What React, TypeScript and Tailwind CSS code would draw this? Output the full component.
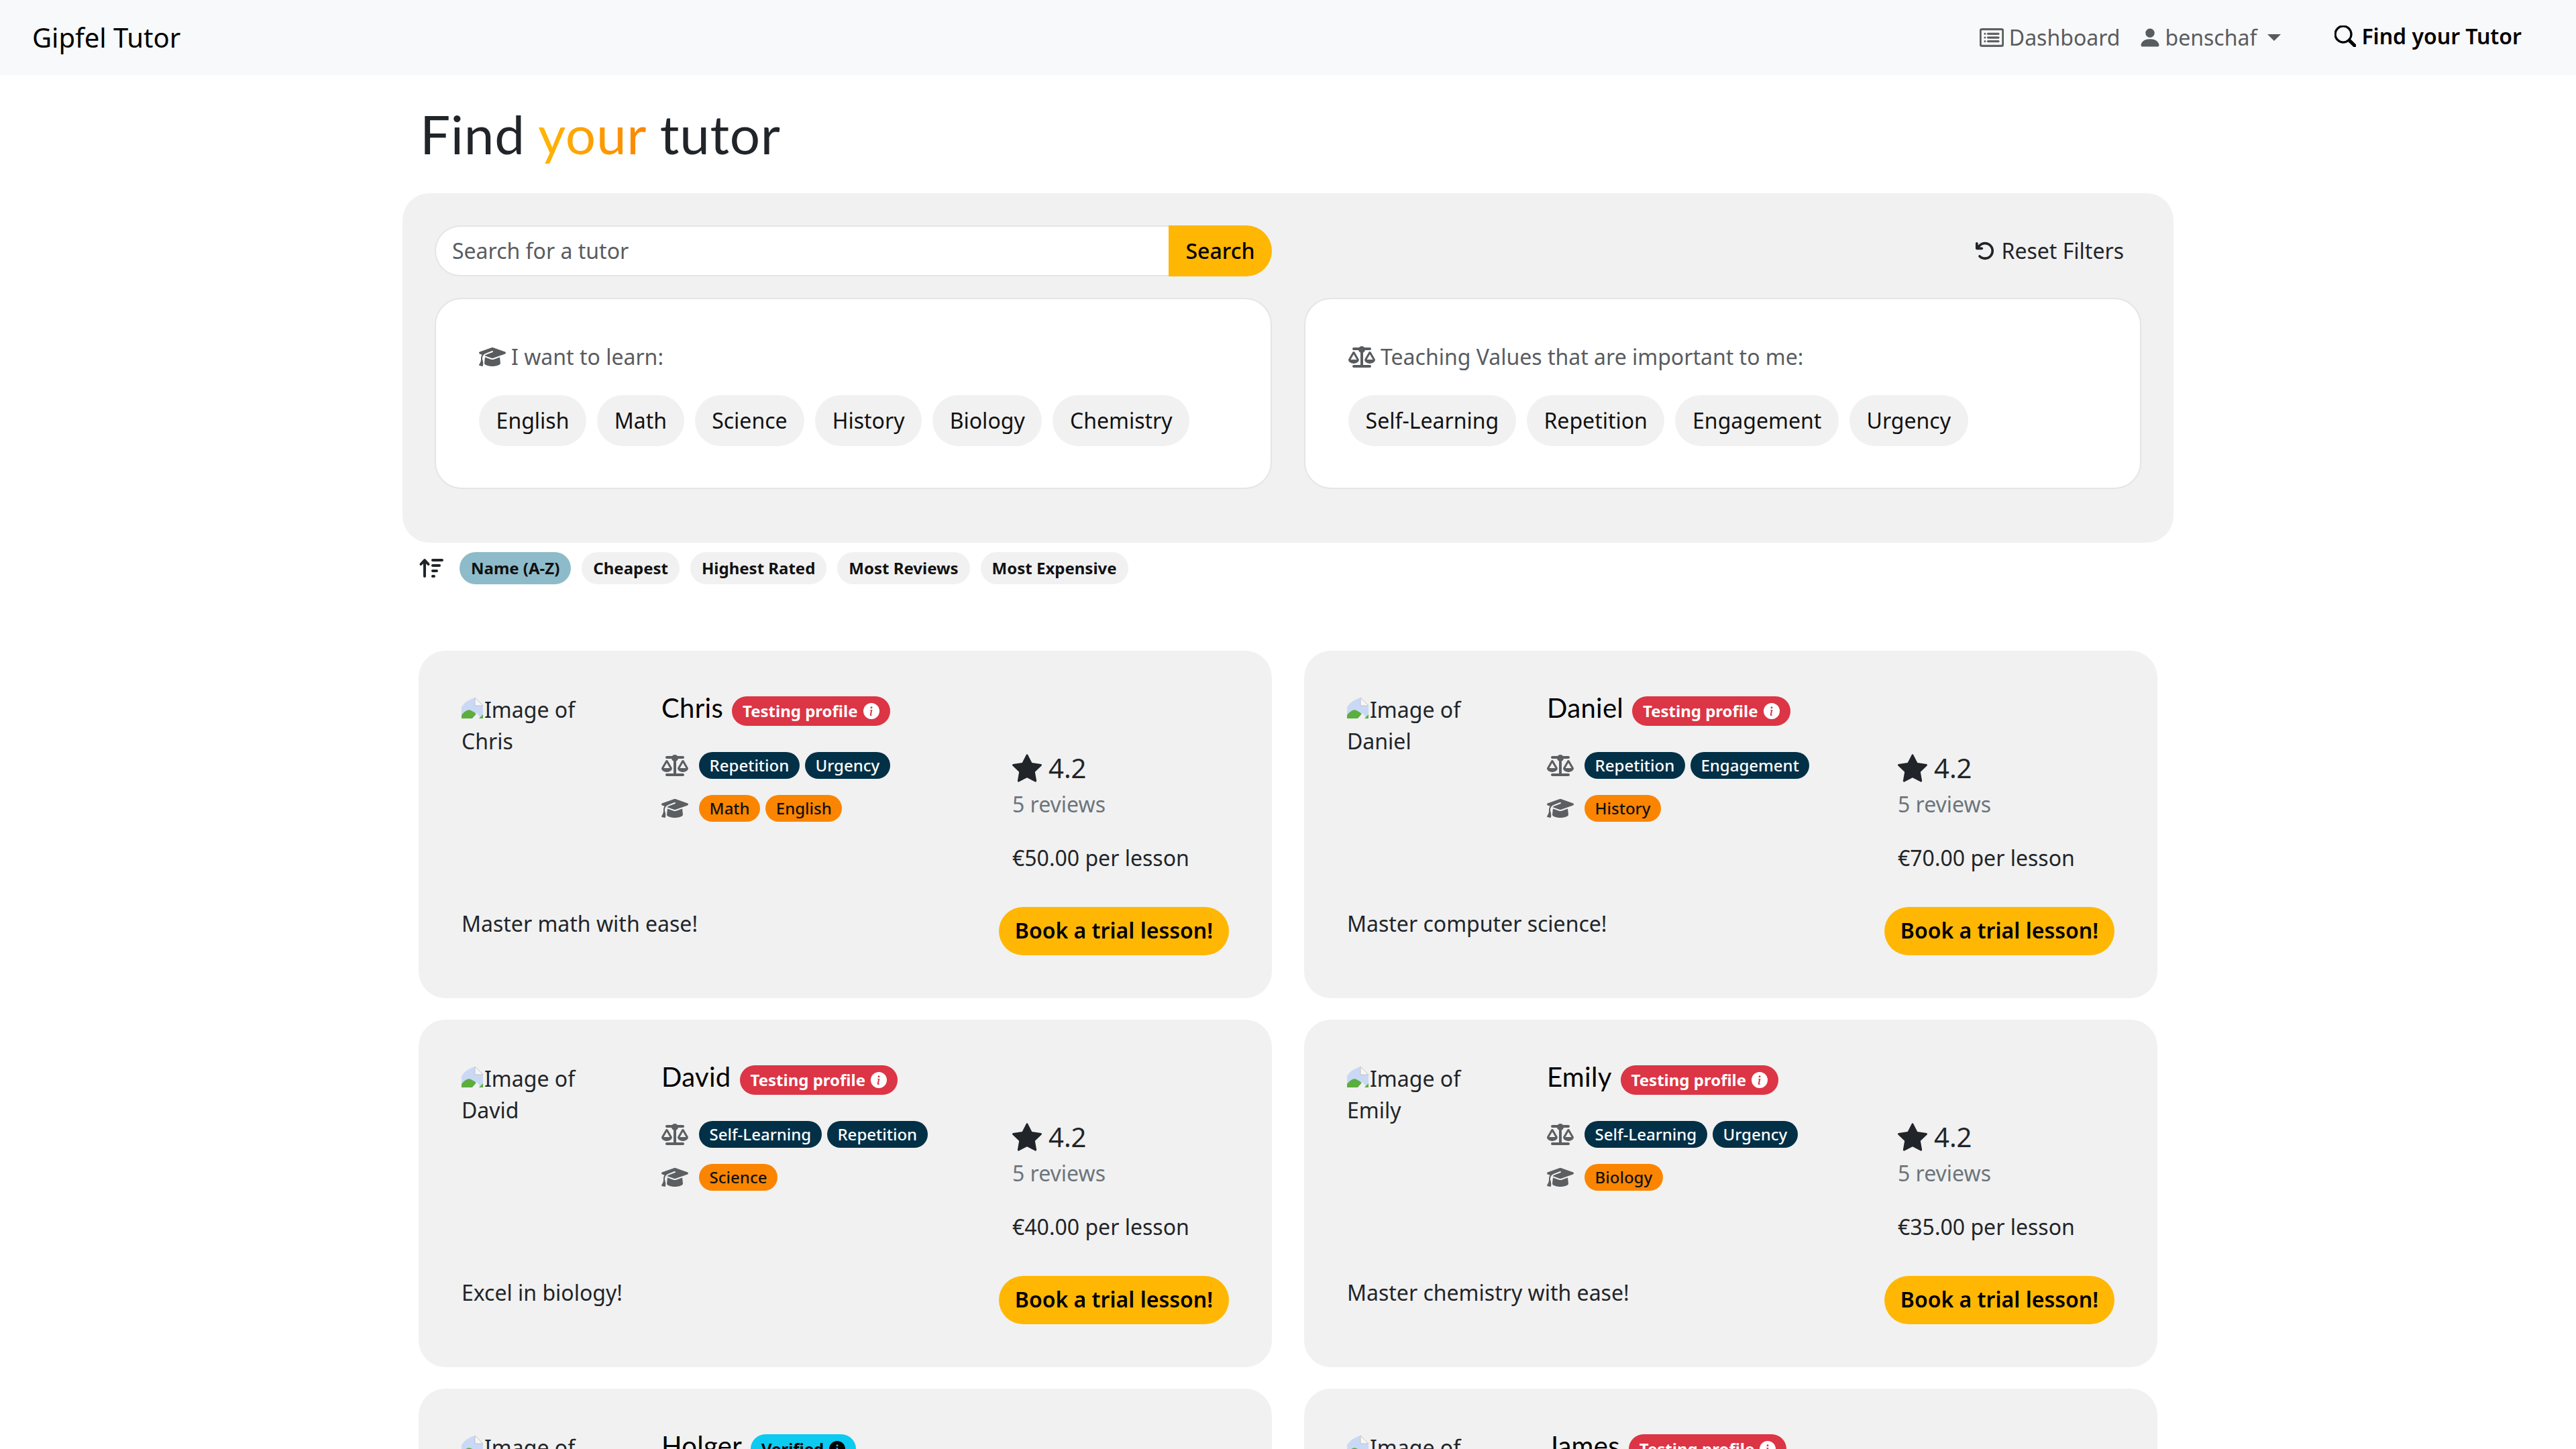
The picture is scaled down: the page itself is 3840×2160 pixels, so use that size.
import { BsCardList, BsInfoCircleFill, BsPersonFill, BsSearch, BsStarFill } from "react-icons/bs";
import { FaArrowRotateLeft, FaArrowUpWideShort, FaGraduationCap, FaScaleBalanced } from "react-icons/fa6";

// ─── Data ─────────────────────────────────────────────────────────────────────

const SUBJECTS = ["English", "Math", "Science", "History", "Biology", "Chemistry"];
const VALUES = ["Self-Learning", "Repetition", "Engagement", "Urgency"];
const SORTS = ["Name (A-Z)", "Cheapest", "Highest Rated", "Most Reviews", "Most Expensive"];

type Tutor = {
  name: string;
  verified?: boolean;
  values: string[];
  subjects: string[];
  price: string;
  tagline: string;
};

const TUTORS: Tutor[] = [
  { name: "Chris", values: ["Repetition", "Urgency"], subjects: ["Math", "English"], price: "€50.00", tagline: "Master math with ease!" },
  { name: "Daniel", values: ["Repetition", "Engagement"], subjects: ["History"], price: "€70.00", tagline: "Master computer science!" },
  { name: "David", values: ["Self-Learning", "Repetition"], subjects: ["Science"], price: "€40.00", tagline: "Excel in biology!" },
  { name: "Emily", values: ["Self-Learning", "Urgency"], subjects: ["Biology"], price: "€35.00", tagline: "Master chemistry with ease!" },
  { name: "Holger", verified: true, values: ["Engagement"], subjects: ["Math"], price: "€45.00", tagline: "Learn with me!" },
  { name: "James", values: ["Urgency"], subjects: ["History"], price: "€30.00", tagline: "Master history with ease!" },
];

const HEADING_FONT = "font-['Lato',sans-serif]";

// ─── Components ───────────────────────────────────────────────────────────────

// Chrome's broken image placeholder, since the reference's photos failed to load
function BrokenImage() {
  return (
    <svg width="32" height="32" viewBox="0 0 16 16" className="inline-block align-[-2px] mr-[2px]">
      <path d="M0 15.5V7Q3 2 10 0l6 6v9.5z" fill="#c9d9f5" />
      <path d="M10 0v6h6z" fill="#f7f7f7" stroke="#b8b8b8" strokeWidth="0.4" />
      <path d="M0 15.5V13Q4 8 7 9.5q2.5 1 4 3l-3 3z" fill="#5cae3f" />
      <path d="M8 15.5l3.5-4 3 4z" fill="#f1f1f1" />
      <path d="M13 15.5l3-3v3z" fill="#5cae3f" />
    </svg>
  );
}

function FilterPill({ label }: { label: string }) {
  return <span className="h-[76px] rounded-full bg-[#f1f1f1] px-[25.6px] flex items-center text-[32px] text-[#111]">{label}</span>;
}

function FilterCard({ icon, title, options }: { icon: React.ReactNode; title: string; options: string[] }) {
  return (
    <div className="h-[285px] rounded-[40px] border-2 border-[#e3e5e8] bg-white px-[64px] pt-[62px]">
      <div className="flex items-center gap-[8px] h-[48px] text-[#595c5f]">
        {icon}
        <span>{title}</span>
      </div>
      <div className="mt-[33px] flex gap-[16px]">
        {options.map((o) => (
          <FilterPill key={o} label={o} />
        ))}
      </div>
    </div>
  );
}

function Badge({ label, className }: { label: string; className: string }) {
  return <span className={`h-[40px] rounded-full px-[15.6px] flex items-center text-[24px] font-medium ${className}`}>{label}</span>;
}

function TutorCard({ tutor }: { tutor: Tutor }) {
  return (
    <div className="h-[518px] rounded-[40px] bg-[#f1f1f1] px-[64px] pt-[64px] flex flex-col">
      <div className="flex h-[318px]">
        <div className="w-[298px] text-[#212529] pr-[60px] leading-[47px]">
          <BrokenImage />
          Image of {tutor.name}
        </div>

        <div className="w-[523px]">
          <div className="flex items-center gap-[13px] h-[48px]">
            <span className={`${HEADING_FONT} -mt-[6px] text-[40px] tracking-[0.3px] text-black`}>{tutor.name}</span>
            {tutor.verified ? (
              <span className="mt-[4px] h-[44px] rounded-full bg-[#0dcaf0] text-black px-[16px] flex items-center gap-[8px] text-[24px] font-bold">
                Verified <BsInfoCircleFill className="w-[24px] h-[24px]" />
              </span>
            ) : (
              <span className="mt-[4px] h-[44px] rounded-full bg-[#dc3545] text-white px-[16px] flex items-center gap-[8px] text-[24px] font-bold">
                Testing profile <BsInfoCircleFill className="w-[24px] h-[24px]" />
              </span>
            )}
          </div>

          <div className="mt-[39px] flex items-center gap-[8px]">
            <FaScaleBalanced className="w-[40px] h-[32px] text-[#5c5f62] mr-[8px]" />
            {tutor.values.map((v) => (
              <Badge key={v} label={v} className="bg-[#023047] text-white" />
            ))}
          </div>
          <div className="mt-[24px] flex items-center gap-[8px]">
            <FaGraduationCap className="w-[40px] h-[32px] text-[#5c5f62] mr-[8px]" />
            {tutor.subjects.map((s) => (
              <Badge key={s} label={s} className="bg-[#fb8500] text-[#111]" />
            ))}
          </div>
        </div>

        <div className="pt-[81px]">
          <div className="flex items-center gap-[10px] h-[60px] text-[40px] text-[#212529]">
            <BsStarFill className="w-[44px] h-[44px]" />
            <span>4.2</span>
          </div>
          <div className="text-[#6c757d]">5 reviews</div>
          <div className="text-[#212529] mt-[32px]">{tutor.price} per lesson</div>
        </div>
      </div>

      <div className="flex items-center justify-between">
        <span className="text-[#212529] -mt-[22px]">{tutor.tagline}</span>
        <button className="h-[72px] pb-[3px] px-[24px] rounded-full bg-[#ffb703] text-black font-semibold text-[32px]">Book a trial lesson!</button>
      </div>
    </div>
  );
}

// ─── Page ─────────────────────────────────────────────────────────────────────

export default function App() {
  return (
    <div className="h-[2160px] overflow-hidden bg-white font-['Noto_Sans',sans-serif] text-[32px] leading-[48px]">
      {/* Navbar */}
      <nav className="h-[112px] bg-[#f8f9fa] flex items-center px-[48px]">
        <span className="text-[40px] text-black">Gipfel Tutor</span>
        <div className="ml-auto flex items-center text-[#595c5f]">
          <BsCardList className="w-[36px] h-[36px]" strokeWidth="0.4" />
          <span className="ml-[8px]">Dashboard</span>
          <BsPersonFill className="ml-[27px] w-[36px] h-[36px]" />
          <span className="ml-[4px]">benschaf</span>
          <span className="ml-[16px] w-0 h-0 border-x-[10px] border-x-transparent border-t-[10px] border-t-[#595c5f]" />
          <BsSearch className="ml-[80px] -mt-[4px] w-[32px] h-[32px] text-black" strokeWidth="0.6" />
          <span className="ml-[8px] -mt-[4px] font-semibold text-black">Find your Tutor</span>
          <span className="w-[33px]" />
        </div>
      </nav>

      <main className="w-[2640px] mx-auto">
        <h1 className={`${HEADING_FONT} h-[176px] pl-[26px] pt-[39px] text-[80px] leading-[96px] tracking-[0.75px] text-[#212529]`}>
          Find{" "}
          <span className="bg-gradient-to-r from-[#ffb703] to-[#fb8500] bg-clip-text text-transparent">your</span> tutor
        </h1>

        {/* Filters */}
        <section className="h-[521px] rounded-[40px] bg-[#f1f1f1] px-[48px] pt-[48px]">
          <div className="flex items-center justify-between">
            <div className="flex w-[1248px] h-[76px]">
              <div className="flex-1 rounded-l-full border-2 border-r-0 border-[#e3e5e8] bg-white pl-[24px] flex items-center text-[#595c5f]">
                Search for a tutor
              </div>
              <button className="w-[154px] rounded-r-full bg-[#ffb703] text-black font-medium">Search</button>
            </div>
            <div className="flex items-center gap-[10px] pr-[26px] text-[#212529]">
              <FaArrowRotateLeft className="w-[30px] h-[30px]" />
              <span>Reset Filters</span>
            </div>
          </div>

          <div className="mt-[32px] grid grid-cols-2 gap-[48px]">
            <FilterCard icon={<FaGraduationCap className="w-[40px] h-[32px]" />} title="I want to learn:" options={SUBJECTS} />
            <FilterCard icon={<FaScaleBalanced className="w-[40px] h-[32px]" />} title="Teaching Values that are important to me:" options={VALUES} />
          </div>
        </section>

        {/* Sort */}
        <div className="mt-[14px] pl-[24px] flex items-center h-[48px]">
          <FaArrowUpWideShort className="w-[38px] h-[32px] text-[#212529] mr-[23px]" />
          <div className="flex gap-[16px]">
            {SORTS.map((s, i) => (
              <span
                key={s}
                className={`h-[48px] rounded-full px-[17px] flex items-center text-[24px] font-bold text-[#111] ${i === 0 ? "bg-[#8ebbc9]" : "bg-[#f1f1f1]"}`}
              >
                {s}
              </span>
            ))}
          </div>
        </div>

        {/* Tutors */}
        <div className="mt-[99px] px-[24px] grid grid-cols-2 gap-x-[48px] gap-y-[32px]">
          {TUTORS.map((t) => (
            <TutorCard key={t.name} tutor={t} />
          ))}
        </div>
      </main>
    </div>
  );
}
